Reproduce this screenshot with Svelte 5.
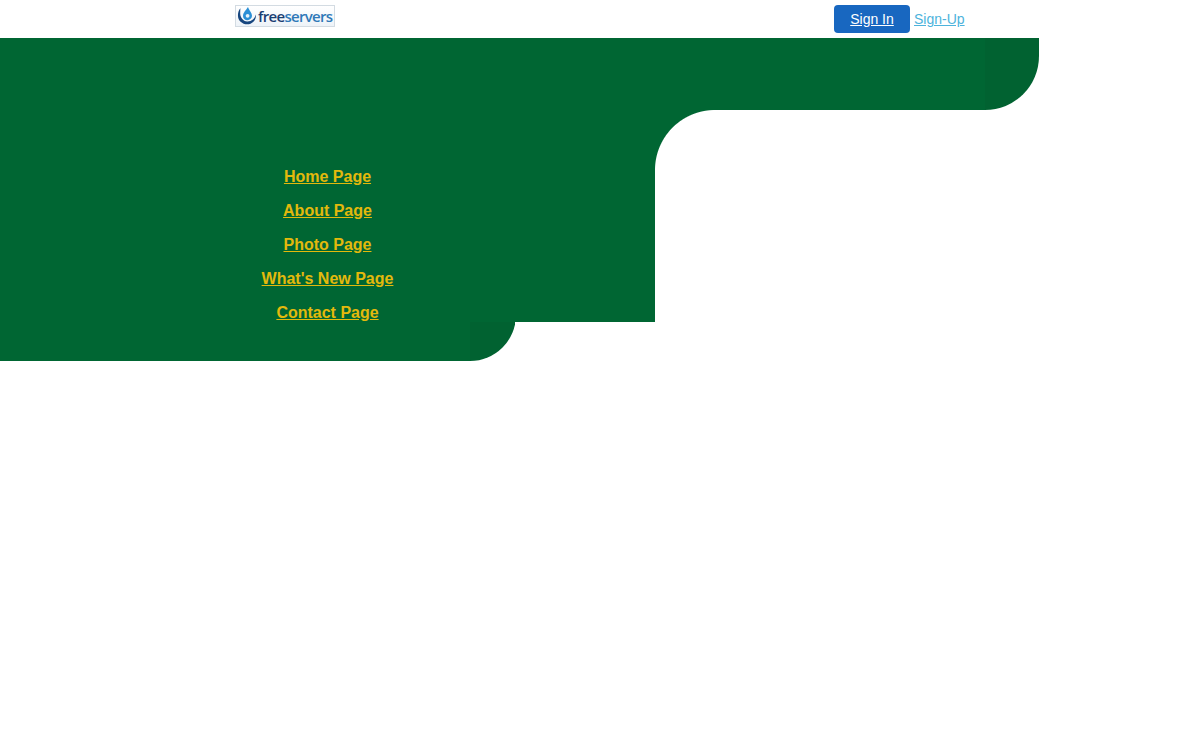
<script>
	const pages = ["Home Page", "About Page", "Photo Page", "What's New Page", "Contact Page"];
</script>

<header class="topbar">
	<a class="logo" href="#home">
		<svg width="20" height="20" viewBox="0 0 20 20" aria-hidden="true">
			<path d="M3.4 2.2 C0 6.4 0.2 12.6 3.6 15.8 C7.2 19.2 13.2 19.2 16.4 15.8 C18.4 13.8 19.2 11 18.8 8.4 C18 12.4 14.4 15.6 10.2 15.4 C5.8 15.2 3 11 3.2 6.8 C3.2 5.2 3.3 3.6 3.4 2.2 Z" fill="#17467f" />
			<path d="M11 1 C9.2 4 6 6.6 6 10 C6 12.6 8 14.2 10.4 14.2 C13 14.2 15 12.2 15 9.8 C15 6.6 12 4.4 11 1 Z" fill="#2b8fd6" />
			<circle cx="10.6" cy="9.8" r="1.9" fill="#e8f3fb" />
		</svg>
		<span class="free">free</span><span class="servers">servers</span>
	</a>
	<div class="account">
		<a class="signin" href="#signin">Sign In</a>
		<a class="signup" href="#signup">Sign-Up</a>
	</div>
</header>

<div class="banner">
	<div class="band"></div>
	<div class="middle">
		<nav class="menu">
			{#each pages as page}
				<a href="#page">{page}</a>
			{/each}
		</nav>
		<div class="notch"></div>
	</div>
	<div class="foot">
		<div class="foot-corner"></div>
	</div>
</div>

<style>
	:global(body) {
		background: #fff;
		font-family: "Liberation Sans", Arial, sans-serif;
	}
	.topbar {
		height: 38px;
		box-sizing: border-box;
		padding-left: 235px;
		display: flex;
		align-items: flex-start;
	}
	.logo {
		width: 100px;
		height: 22px;
		margin-top: 5px;
		box-sizing: border-box;
		border: 1px solid #d3dbe2;
		background: linear-gradient(#ffffff, #eef3f8);
		display: flex;
		align-items: center;
		padding-left: 1px;
		font-family: "Open Sans", sans-serif;
		font-size: 15px;
		font-weight: 600;
		letter-spacing: -0.7px;
		text-decoration: none;
		overflow: hidden;
	}
	.logo svg {
		flex: none;
		margin-right: 1px;
	}
	.free {
		color: #1b3f73;
	}
	.servers {
		color: #2f79b8;
	}
	.account {
		margin-left: 499px;
		margin-top: 5px;
		display: flex;
		align-items: center;
		gap: 4px;
		font-size: 14px;
	}
	.signin {
		width: 76px;
		height: 28px;
		line-height: 28px;
		text-align: center;
		background: #1867c0;
		color: #fff;
		border-radius: 4px;
	}
	.signup {
		color: #4db3dc;
	}
	.band {
		width: 1039px;
		height: 72px;
		background: linear-gradient(to right, #006633 985px, #016231 985px);
		border-bottom-right-radius: 54px;
	}
	.middle {
		width: 715px;
		height: 212px;
		display: flex;
		overflow: hidden;
		position: relative;
	}
	.menu {
		width: 655px;
		background: #006633;
		display: flex;
		flex-direction: column;
		align-items: center;
		padding-top: 58px;
		box-sizing: border-box;
		gap: 16px;
		font-size: 16px;
		font-weight: bold;
		line-height: 18px;
	}
	.menu a {
		color: #e3b90c;
	}
	.notch {
		width: 60px;
		height: 60px;
		background: radial-gradient(circle at 60px 60px, transparent 59.5px, #006633 60.5px);
	}
	.foot {
		width: 515px;
		height: 39px;
		overflow: hidden;
		background: linear-gradient(#006633, #006633) left / 470px 100% no-repeat;
	}
	.foot-corner {
		width: 46px;
		height: 46px;
		margin-left: 470px;
		margin-top: -7px;
		background: #016231;
		border-bottom-right-radius: 46px;
	}
</style>
